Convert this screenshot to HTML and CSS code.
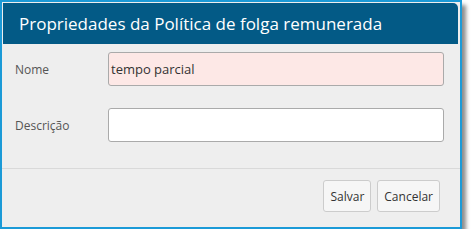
FILE: index.html
```html
<!DOCTYPE html>
<html>
  <head>
    <meta charset="UTF-8">
    <title>Propriedades da Política de folga remunerada</title>
    <link rel="stylesheet" href="styles.css">
  </head>
  <body>
    <div class="dialog">
      <div class="dialog-header">Propriedades da Política de folga remunerada</div>

      <div class="dialog-body">
        <div class="field">
          <label class="field-label">Nome</label>
          <div class="field-input invalid">tempo parcial</div>
        </div>
        <div class="field">
          <label class="field-label">Descrição</label>
          <div class="field-input"></div>
        </div>
      </div>

      <div class="dialog-footer">
        <button class="btn">Salvar</button>
        <button class="btn">Cancelar</button>
      </div>
    </div>
  </body>
</html>
```

FILE: styles.css
```css
body {
  margin: 0;
  background: #ffffff;
  font-family: "Open Sans", "Noto Sans", sans-serif;
}

.dialog {
  width: 458px;
  height: 225px;
  border: 2px solid #1b9ad7;
  background: #eeeeee;
  box-shadow: 4px 5px 4px rgba(0, 0, 0, 0.45);
  display: flex;
  flex-direction: column;
}

.dialog-header {
  margin: 1px 2px 0 1px;
  height: 41px;
  background: #035a86;
  color: #ffffff;
  font-size: 17px;
  line-height: 41px;
  padding-left: 16px;
  border-top-right-radius: 5px;
  white-space: nowrap;
}

.dialog-body {
  padding: 8px 16px 0 13px;
  border-bottom: 1px solid #d9d9d9;
  height: 125px;
  box-sizing: border-box;
}

.field {
  display: flex;
  align-items: center;
  margin-bottom: 22px;
}

.field-label {
  width: 93px;
  font-size: 12px;
  color: #555555;
}

.field-input {
  flex: 1;
  height: 32px;
  border: 1px solid #aaaaaa;
  border-radius: 3px;
  background: #ffffff;
  font-size: 13px;
  color: #333333;
  line-height: 32px;
  padding-left: 2px;
}

.field-input.invalid {
  background: #fde8e6;
}

.dialog-footer {
  display: flex;
  justify-content: flex-end;
  gap: 6px;
  padding: 11px 20px 0 0;
}

.btn {
  height: 32px;
  padding: 0 6px;
  border: 1px solid #cccccc;
  border-radius: 3px;
  background: #f6f6f6;
  color: #333333;
  font-family: "Open Sans", "Noto Sans", sans-serif;
  font-size: 12px;
}
```
